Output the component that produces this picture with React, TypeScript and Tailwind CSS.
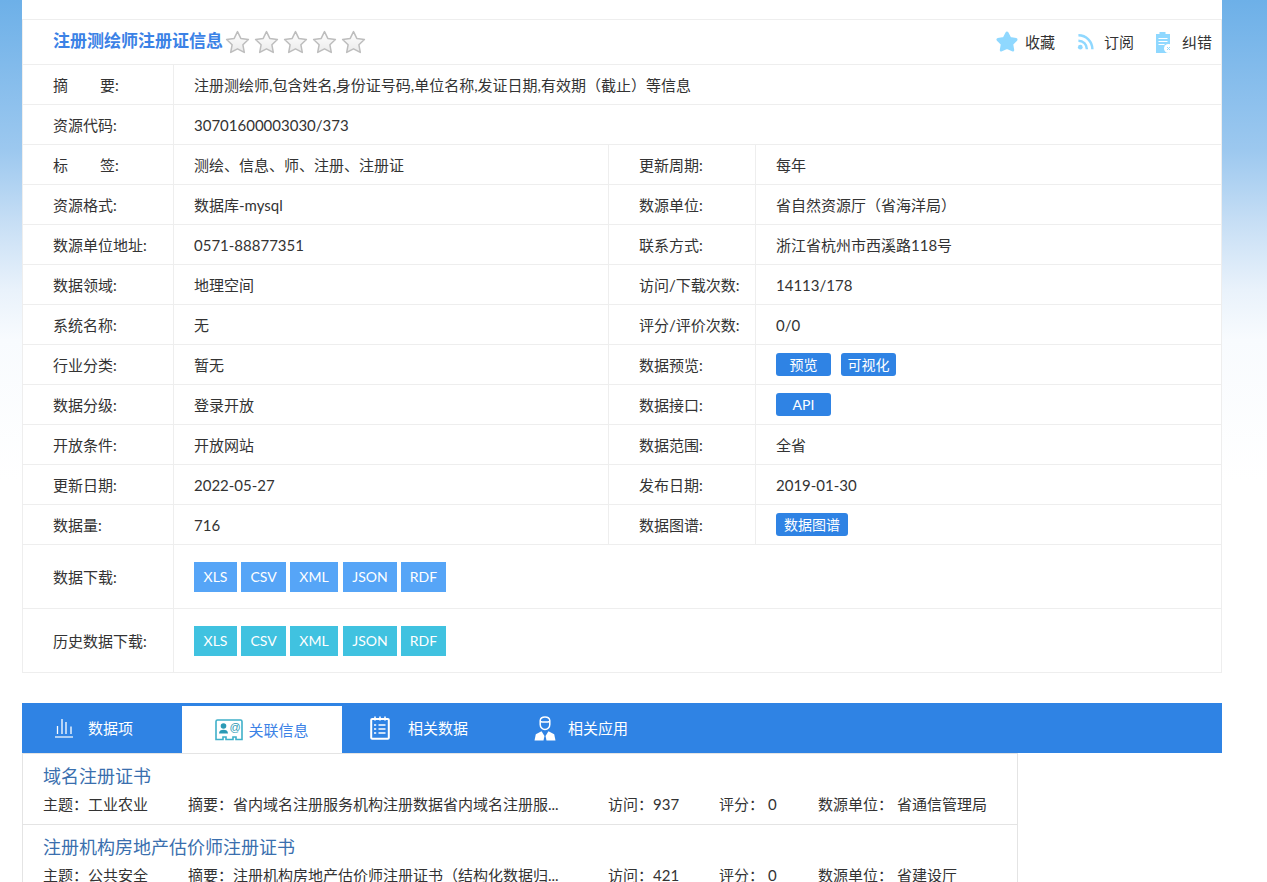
const FONT = "font-['Lato','Noto_Sans_CJK_SC',sans-serif]";

const ROWS: [string, React.ReactNode, string, React.ReactNode][] = [
  ["标签", "测绘、信息、师、注册、注册证", "更新周期:", "每年"],
  ["资源格式:", "数据库-mysql", "数源单位:", "省自然资源厅（省海洋局）"],
  ["数源单位地址:", "0571-88877351", "联系方式:", "浙江省杭州市西溪路118号"],
  ["数据领域:", "地理空间", "访问/下载次数:", "14113/178"],
  ["系统名称:", "无", "评分/评价次数:", "0/0"],
  [
    "行业分类:",
    "暂无",
    "数据预览:",
    <div className="flex gap-[10px]">
      <Tag w="w-[55px]">预览</Tag>
      <Tag w="w-[55px]">可视化</Tag>
    </div>,
  ],
  ["数据分级:", "登录开放", "数据接口:", <Tag w="w-[55px]">API</Tag>],
  ["开放条件:", "开放网站", "数据范围:", "全省"],
  ["更新日期:", "2022-05-27", "发布日期:", "2019-01-30"],
  ["数据量:", "716", "数据图谱:", <Tag w="w-[72px]">数据图谱</Tag>],
];

const FORMATS: [string, string][] = [
  ["XLS", "w-[43px]"],
  ["CSV", "w-[45px]"],
  ["XML", "w-[48px]"],
  ["JSON", "w-[54px] ml-[1px]"],
  ["RDF", "w-[45px]"],
];

const RESULTS = [
  {
    title: "域名注册证书",
    topic: "工业农业",
    desc: "省内域名注册服务机构注册数据省内域名注册服...",
    visits: "937",
    org: "省通信管理局",
  },
  {
    title: "注册机构房地产估价师注册证书",
    topic: "公共安全",
    desc: "注册机构房地产估价师注册证书（结构化数据归...",
    visits: "421",
    org: "省建设厅",
  },
];

function Tag({ w, children }: { w: string; children: React.ReactNode }) {
  return (
    <span className={`${w} h-[23px] flex items-center justify-center rounded-[3px] bg-[#2f83e4] text-[14px] text-white`}>
      {children}
    </span>
  );
}

function StarOutline() {
  return (
    <svg width="25" height="25" viewBox="0 0 25 25" className="shrink-0">
      <defs>
        <linearGradient id="starFill" x1="0" y1="0" x2="0" y2="1">
          <stop offset="0" stopColor="#ffffff" />
          <stop offset="1" stopColor="#eaeaea" />
        </linearGradient>
      </defs>
      <path
        d="M12.5 1.6 L15.8 8.4 L23.4 9.5 L17.9 14.8 L19.3 22.4 L12.5 18.8 L5.7 22.4 L7.1 14.8 L1.600 9.500 L9.200 8.400 Z"
        fill="url(#starFill)"
        stroke="#bdbdbd"
        strokeWidth="1.5"
        strokeLinejoin="round"
      />
    </svg>
  );
}

function ActionStar() {
  return (
    <svg width="22" height="22" viewBox="0 0 22 22">
      <path
        d="M11 2 L14 7.600 L20 8.600 L15.700 13 L16.700 19 L11 16.300 L5.300 19 L6.300 13 L2 8.600 L8 7.600 Z"
        fill="#8fd8ff"
        stroke="#8fd8ff"
        strokeWidth="3"
        strokeLinejoin="round"
      />
    </svg>
  );
}

function ActionRss() {
  return (
    <svg width="17" height="18" viewBox="0 0 18 18" fill="none" stroke="#8fd8ff" strokeWidth="2.6">
      <circle cx="3.500" cy="14.500" r="2.500" fill="#8fd8ff" stroke="none" />
      <path d="M1.500 7.600a9 9 0 0 1 9 9" />
      <path d="M1.500 1.800a14.800 14.800 0 0 1 14.800 14.800" />
    </svg>
  );
}

function ActionClipboard() {
  return (
    <svg width="18" height="22" viewBox="0 0 18 22">
      <path d="M1 3h3.500V1h6v2H15v19H1z" fill="#8fd8ff" />
      <path d="M3.500 7.500h9M3.500 10.500h9M3.500 13.500h6" stroke="#ffffff" strokeWidth="1.200" />
      <circle cx="13.500" cy="17.500" r="4.500" fill="#ffffff" />
      <path d="M12 16l3 3M15 16l-3 3" stroke="#8fd8ff" strokeWidth="1" />
    </svg>
  );
}

function ChartIcon() {
  return (
    <svg width="20" height="20" viewBox="0 0 20 20" fill="none" stroke="#ffffff">
      <path d="M1 19h18" strokeWidth="1.200" />
      <path d="M3.500 16V8M8 16V1M12 16V4M17 16V8.500" strokeWidth="1.300" />
    </svg>
  );
}

function ContactIcon() {
  return (
    <svg width="28" height="22" viewBox="0 0 28 22" fill="none">
      <path
        d="M2.500 1h23a1.500 1.500 0 0 1 1.500 1.500V20.500h-6V18h-3v2.500h-7V18H8v2.500H1V2.500A1.500 1.500 0 0 1 2.500 1z"
        stroke="#3fb0c9"
        strokeWidth="1.600"
      />
      <circle cx="8.500" cy="7" r="2.800" fill="#2b9ab5" />
      <path d="M4 14.500c0-2.800 2-3.800 4.500-3.800s4.500 1 4.500 3.800z" fill="#2b9ab5" />
      <text x="14.500" y="12" fontSize="11" fill="#2b9ab5" fontFamily="'Liberation Sans',sans-serif">@</text>
    </svg>
  );
}

function NotepadIcon() {
  return (
    <svg width="20" height="24" viewBox="0 0 20 24" fill="none" stroke="#ffffff">
      <rect x="1.200" y="3" width="17.600" height="19.800" rx="1" strokeWidth="2" />
      <path d="M5 .500v4M10 .500v4M15 .500v4" strokeWidth="1.600" />
      <path d="M8.500 9h7M8.500 13h7M8.500 17h7" strokeWidth="1.600" />
      <path d="M4 9h2.200M4 13h2.200M4 17h2.200" strokeWidth="1.400" />
    </svg>
  );
}

function PersonIcon() {
  return (
    <svg width="22" height="25" viewBox="0 0 22 25" fill="none">
      <path
        d="M6.200 4.500C6.500 2 8.500 1 11 1s4.500 1 4.800 3.500v4c0 2.800-2.200 5-4.800 5s-4.800-2.200-4.800-5z"
        stroke="#ffffff"
        strokeWidth="1.500"
      />
      <path d="M6.200 5.500c2 .8 7.600.8 9.600 0" stroke="#ffffff" strokeWidth="1.500" />
      <path d="M.5 24.500 L1.800 18.300 L7.500 15.300 L10.500 20 L9.500 24.500z" fill="#ffffff" />
      <path d="M21.500 24.500 L20.200 18.300 L14.500 15.300 L11.500 20 L12.500 24.500z" fill="#ffffff" />
    </svg>
  );
}

function Cell({ className = "", children }: { className?: string; children: React.ReactNode }) {
  return <div className={`flex items-center ${className}`}>{children}</div>;
}

function SpacedLabel({ a, b }: { a: string; b: string }) {
  return (
    <>
      <span className="w-[47px]">{a}</span>
      <span>{b}:</span>
    </>
  );
}

function DownloadRow({ label, color }: { label: string; color: string }) {
  return (
    <div className="flex h-[64px] border-b border-[#eeeeee]">
      <Cell className="w-[151px] pl-[30px] pt-[2px] border-r border-[#eeeeee]">{label}</Cell>
      <Cell className="flex-1 pl-[20px] gap-[4px]">
        {FORMATS.map(([name, w]) => (
          <span key={name} className={`${w} h-[30px] flex items-center justify-center text-[14px] text-white ${color}`}>
            {name}
          </span>
        ))}
      </Cell>
    </div>
  );
}

export default function App() {
  return (
    <div className={`${FONT} h-[882px] overflow-hidden bg-[linear-gradient(to_bottom,#6db0e8_0px,#9cc8ef_150px,#c8dff5_225px,#e9f2fb_290px,#f8fbfe_340px,#ffffff_480px)] text-[15px] text-[#333333]`}>
      <div className="ml-[22px] w-[1200px] bg-white">
        <div className="h-[19px]" />
        <div className="border-x border-t border-[#eeeeee]">
          {/* Title bar */}
          <div className="flex h-[45px] items-center justify-between border-b border-[#eeeeee] pl-[30px] pr-[9px]">
            <div className="flex items-center">
              <span className="-mt-[3px] text-[17px] font-bold leading-none text-[#3b82e6]">注册测绘师注册证信息</span>
              <div className="ml-[2px] mt-[1px] flex gap-[4px]">
                <StarOutline />
                <StarOutline />
                <StarOutline />
                <StarOutline />
                <StarOutline />
              </div>
            </div>
            <div className="-mt-[1px] flex items-center text-[15px]">
              <ActionStar />
              <span className="ml-[7px] mt-[2px]">收藏</span>
              <span className="ml-[22px]"><ActionRss /></span>
              <span className="ml-[10px] mt-[2px]">订阅</span>
              <span className="ml-[21px]"><ActionClipboard /></span>
              <span className="ml-[9px] mt-[2px]">纠错</span>
            </div>
          </div>

          <div className="flex h-[40px] border-b border-[#eeeeee]">
            <Cell className="w-[151px] pl-[30px] pt-[2px] border-r border-[#eeeeee]">
              <SpacedLabel a="摘" b="要" />
            </Cell>
            <Cell className="flex-1 pl-[20px] pt-[2px]">注册测绘师,包含姓名,身份证号码,单位名称,发证日期,有效期（截止）等信息</Cell>
          </div>
          <div className="flex h-[40px] border-b border-[#eeeeee]">
            <Cell className="w-[151px] pl-[30px] pt-[2px] border-r border-[#eeeeee]">资源代码:</Cell>
            <Cell className="flex-1 pl-[20px] pt-[2px]">30701600003030/373</Cell>
          </div>

          {ROWS.map(([l1, v1, l2, v2], i) => (
            <div key={i} className="flex h-[40px] border-b border-[#eeeeee]">
              <Cell className="w-[151px] pl-[30px] pt-[2px] border-r border-[#eeeeee]">
                {l1 === "标签" ? <SpacedLabel a="标" b="签" /> : l1}
              </Cell>
              <Cell className="w-[435px] pl-[20px] pt-[2px] border-r border-[#eeeeee]">{v1}</Cell>
              <Cell className="w-[147px] pl-[30px] pt-[2px] border-r border-[#eeeeee]">{l2}</Cell>
              <Cell className={typeof v2 === "string" ? "flex-1 pl-[20px] pt-[2px]" : "flex-1 pl-[20px]"}>{v2}</Cell>
            </div>
          ))}

          <DownloadRow label="数据下载:" color="bg-[#56a5f7]" />
          <DownloadRow label="历史数据下载:" color="bg-[#40c2e0]" />
        </div>

        {/* Tabs */}
        <div className="mt-[30px] flex h-[50px] bg-[#2f83e4] text-white">
          <div className="flex w-[160px] items-center pl-[32px]">
            <ChartIcon />
            <span className="ml-[14px]">数据项</span>
          </div>
          <div className="mt-[3px] flex w-[160px] items-center justify-center gap-[5px] bg-white text-[#3b82e6]">
            <ContactIcon />
            <span className="mt-[2px]">关联信息</span>
          </div>
          <div className="flex w-[160px] items-center pl-[28px]">
            <NotepadIcon />
            <span className="ml-[18px]">相关数据</span>
          </div>
          <div className="flex w-[160px] items-center pl-[32px]">
            <PersonIcon />
            <span className="ml-[12px]">相关应用</span>
          </div>
        </div>

        {/* Related list */}
        <div className="w-[996px] border-x border-t border-[#e4e4e4]">
          {RESULTS.map((r) => (
            <div key={r.title} className="h-[71px] border-b border-[#e4e4e4] pl-[20px] pt-[10px]">
              <div className="text-[18px] leading-[24px] text-[#3a6fae]">{r.title}</div>
              <div className="mt-[4px] flex text-[15px] leading-[24px]">
                <span className="w-[145px]">主题：{r.topic}</span>
                <span className="w-[420px]">摘要：{r.desc}</span>
                <span className="w-[111px]">访问：{r.visits}</span>
                <span className="w-[99px]">
                  评分：<span className="ml-[4px]">0</span>
                </span>
                <span>
                  数源单位：<span className="ml-[4px]">{r.org}</span>
                </span>
              </div>
            </div>
          ))}
        </div>
      </div>
    </div>
  );
}
